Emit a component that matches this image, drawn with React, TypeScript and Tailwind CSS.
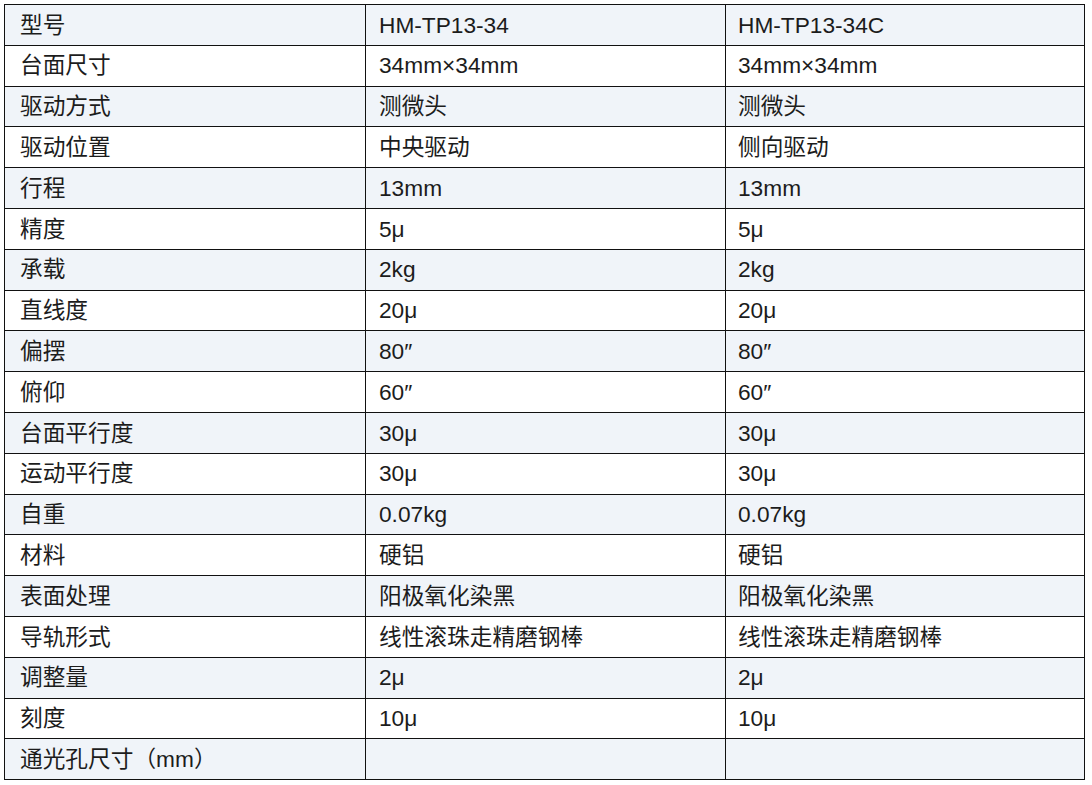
const rows: [string, string, string][] = [
  ['型号', 'HM-TP13-34', 'HM-TP13-34C'],
  ['台面尺寸', '34mm×34mm', '34mm×34mm'],
  ['驱动方式', '测微头', '测微头'],
  ['驱动位置', '中央驱动', '侧向驱动'],
  ['行程', '13mm', '13mm'],
  ['精度', '5μ', '5μ'],
  ['承载', '2kg', '2kg'],
  ['直线度', '20μ', '20μ'],
  ['偏摆', '80″', '80″'],
  ['俯仰', '60″', '60″'],
  ['台面平行度', '30μ', '30μ'],
  ['运动平行度', '30μ', '30μ'],
  ['自重', '0.07kg', '0.07kg'],
  ['材料', '硬铝', '硬铝'],
  ['表面处理', '阳极氧化染黑', '阳极氧化染黑'],
  ['导轨形式', '线性滚珠走精磨钢棒', '线性滚珠走精磨钢棒'],
  ['调整量', '2μ', '2μ'],
  ['刻度', '10μ', '10μ'],
  ['通光孔尺寸（mm）', '', ''],
];

export default function App() {
  return (
    <div className="min-h-screen bg-white pl-[4px] pt-[4px]">
      <table
        className="w-[1081px] table-fixed border-collapse text-[22.7px] leading-none text-[#1c1c1c]"
        style={{ fontFamily: '"Liberation Sans", "Noto Sans CJK SC", sans-serif' }}
      >
        <tbody>
          {rows.map((r, i) => (
            <tr key={i} className={i % 2 === 0 ? 'h-[40.8px] bg-[#f0f4f9]' : 'h-[40.8px] bg-white'}>
              <td className="w-[361px] border border-[#111] pl-[15px] align-middle whitespace-nowrap">{r[0]}</td>
              <td className="w-[360px] border border-[#111] pl-[13px] align-middle whitespace-nowrap">{r[1]}</td>
              <td className="border border-[#111] pl-[12px] align-middle whitespace-nowrap">{r[2]}</td>
            </tr>
          ))}
        </tbody>
      </table>
    </div>
  );
}
